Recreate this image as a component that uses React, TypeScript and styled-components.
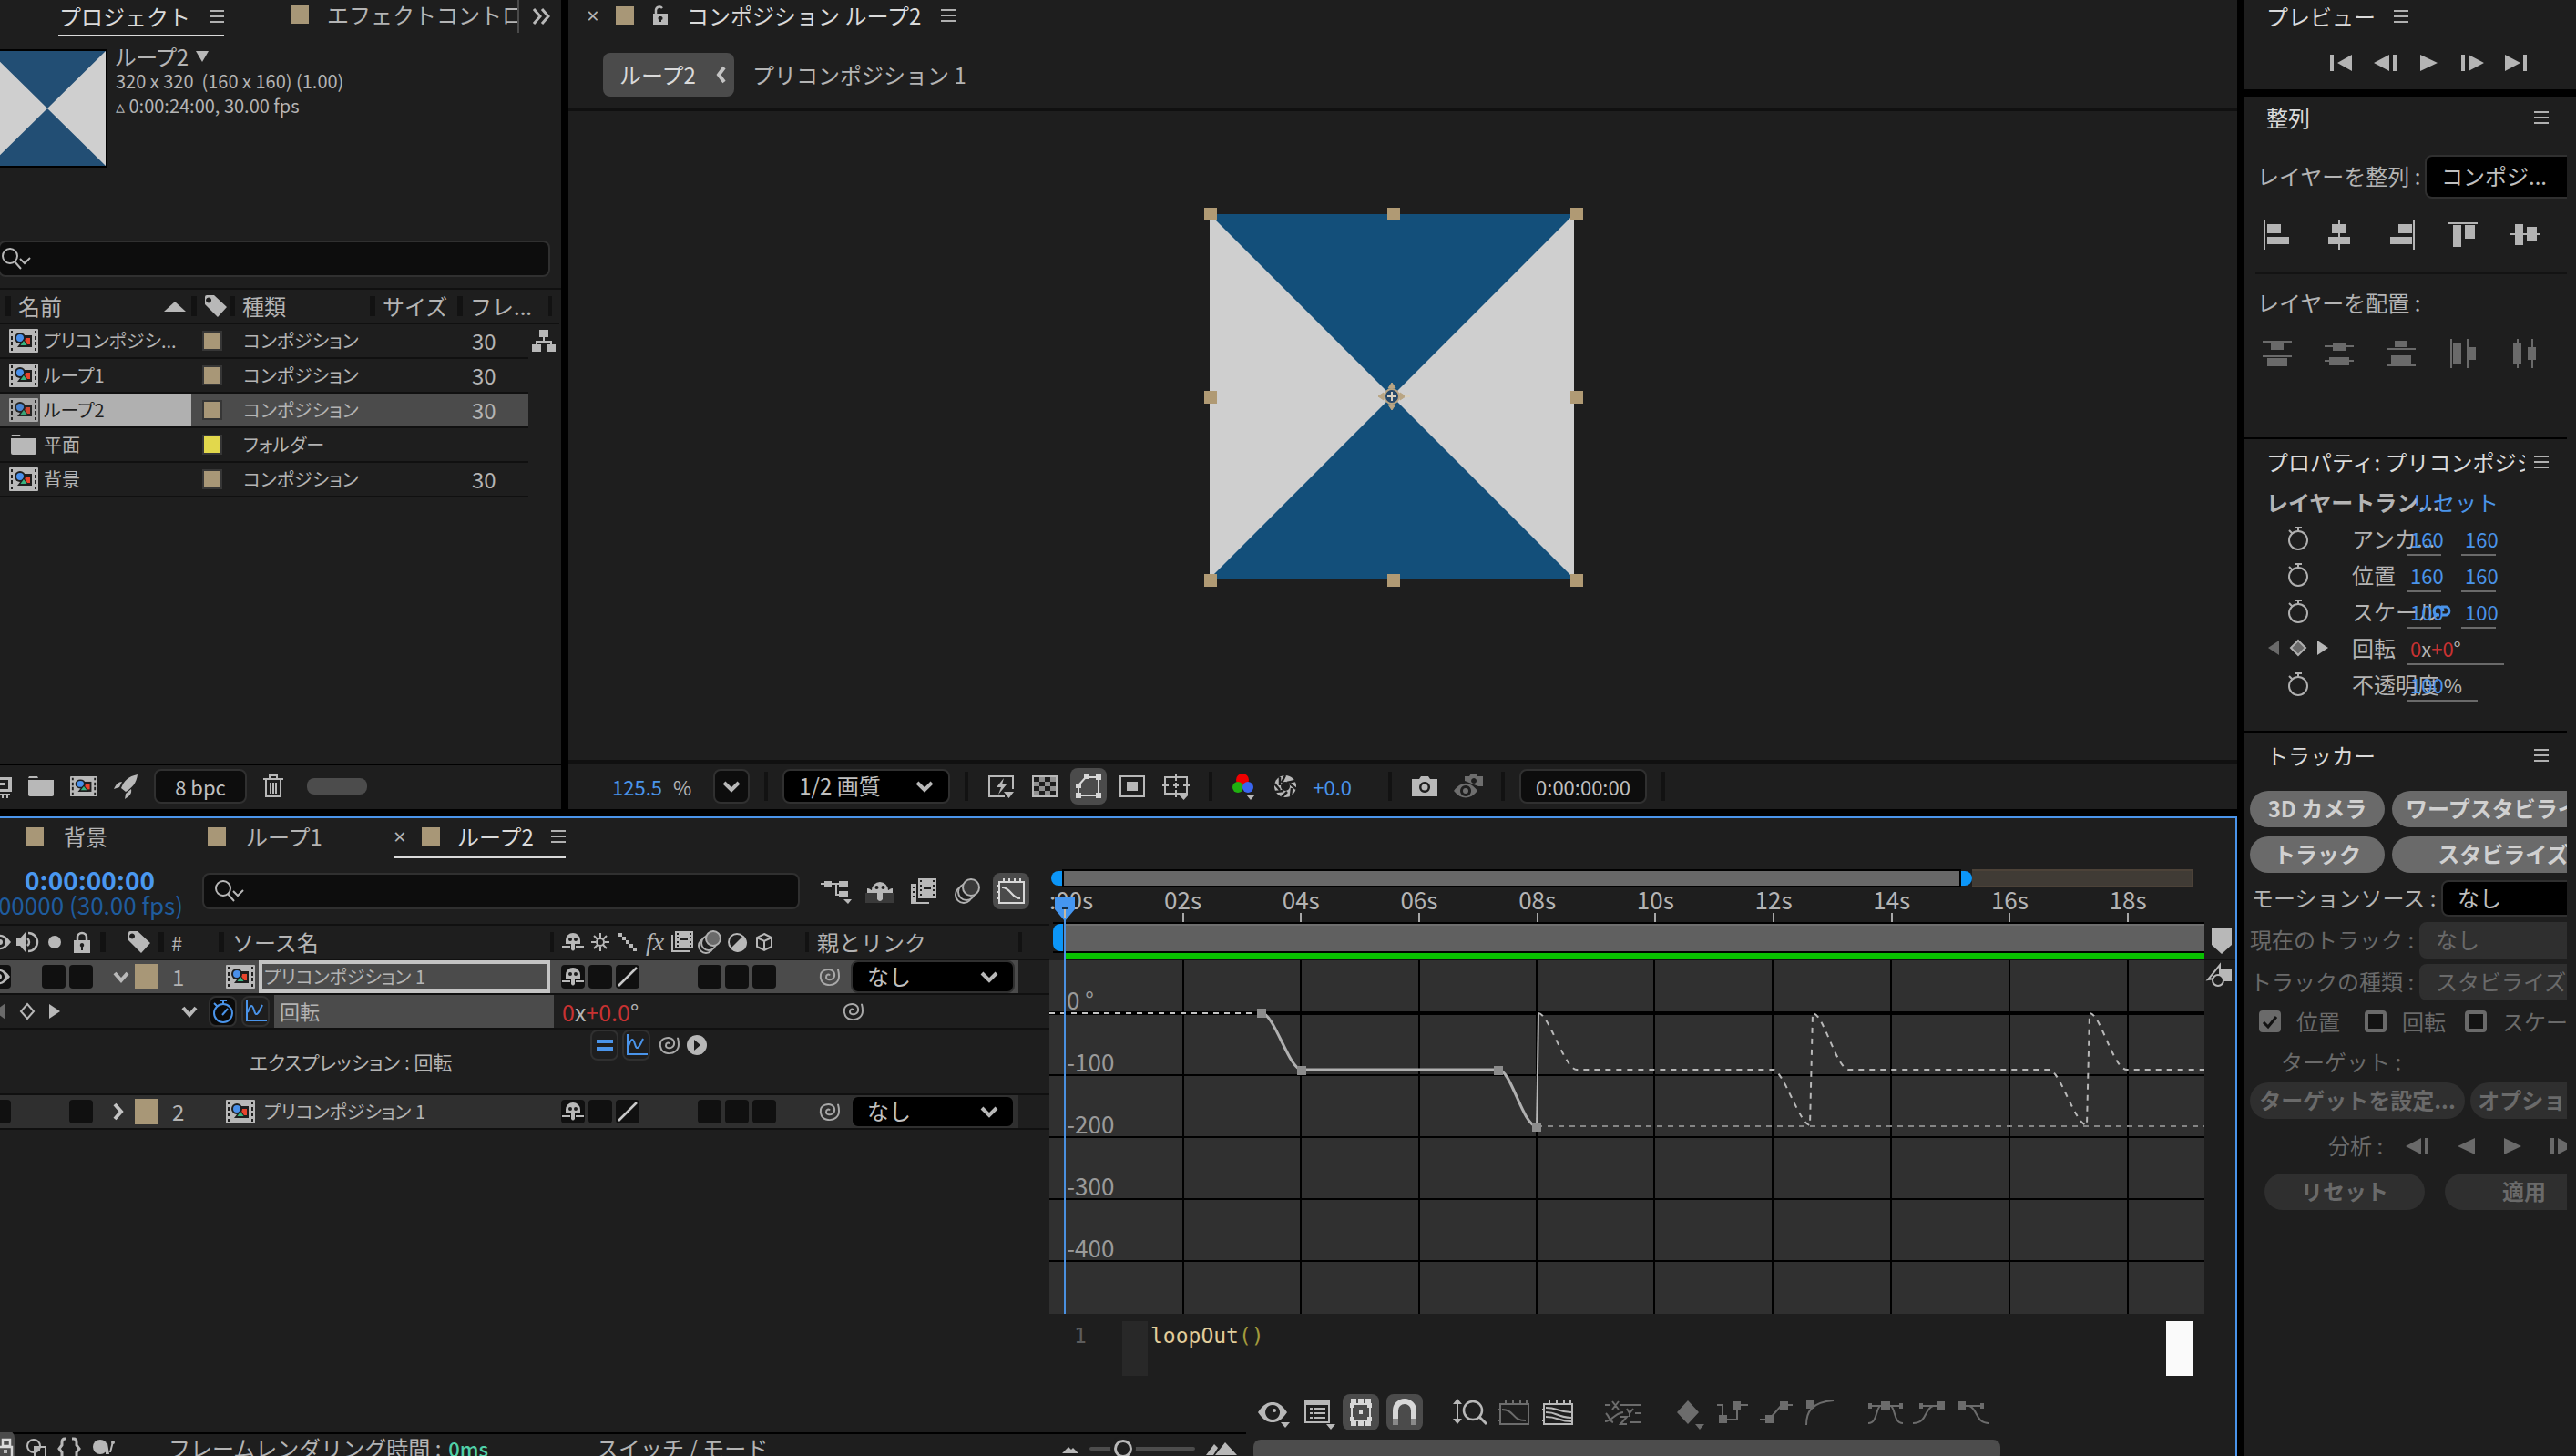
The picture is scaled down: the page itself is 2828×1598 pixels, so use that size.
import React from "react";
import styled, { createGlobalStyle, css } from "styled-components";

const C = {
  bg: "#1e1e1e",
  line: "#101010",
  field: "#0d0d0d",
  edge: "#303030",
  text: "#b4b4b4",
  bright: "#dadada",
  dim: "#6a6a6a",
  select: "#4b4b4b",
  blue: "#4a94ea",
  red: "#c83232",
  tan: "#a89777",
};

const Global = createGlobalStyle`
  * { box-sizing: border-box; }
  body { margin: 0; background: #000; }
  body, button, input, select {
    font-family: "Noto Sans CJK JP", "Noto Sans", sans-serif;
    font-size: 24px;
    line-height: 32px;
    color: ${C.text};
  }
  button, input, select { margin: 0; padding: 0; border: 0; background: none; border-radius: 0; outline: none; }
  button { flex: none; white-space: nowrap; }
  button svg { display: block; }
`;

/* ---------- frame ---------- */

const Frame = styled.div`
  display: grid;
  grid-template-columns: minmax(0, 1fr) 364px;
  gap: 8px;
  height: 100vh;
  overflow: hidden;
  background: #000;
  white-space: nowrap;
`;
const Workspace = styled.div`
  display: grid;
  grid-template-rows: 888px minmax(0, 1fr);
  gap: 8px;
  min-width: 0;
`;
const TopRow = styled.div`
  display: grid;
  grid-template-columns: 616px minmax(0, 1fr);
  gap: 8px;
`;
const Panel = styled.section`
  display: flex;
  flex-direction: column;
  min-width: 0;
  background: ${C.bg};
  overflow: hidden;
`;
const Spacer = styled.div`
  flex: 1;
`;
const Gap = styled.span<{ $w: number }>`
  flex: none;
  width: ${(p) => p.$w}px;
`;
const Svg = styled.svg`
  display: block;
  flex: none;
  overflow: visible;
`;

type IconProps = { w: number; h: number; color?: string; children?: React.ReactNode };
const Icon = ({ w, h, color = "#b8b8b8", children }: IconProps) => (
  <Svg width={w} height={h} viewBox={`0 0 ${w} ${h}`} fill={color} aria-hidden="true">
    {children}
  </Svg>
);

/* ---------- icons ---------- */

const MenuIcon = () => (
  <Icon w={16} h={14} color="#b0b0b0">
    <path d="M0 0h16v2H0zM0 6h16v2H0zM0 12h16v2H0z" />
  </Icon>
);
const SearchIcon = () => (
  <Icon w={32} h={24}>
    <g fill="none" stroke="#b8b8b8" strokeWidth="2">
      <circle cx="9" cy="9" r="8" />
      <path d="M14 15l7 8M20 12l5 5 6-6" />
    </g>
  </Icon>
);
const TagIcon = () => (
  <Icon w={25} h={24}>
    <path fillRule="evenodd" d="M1 2q0-2 2-2h8l14 13-10 11L1 10zM5 2.5a3 3 0 1 0 .1 0z" />
  </Icon>
);
const CompIcon = ({ w = 32, h = 26 }: { w?: number; h?: number }) => (
  <Svg width={w} height={h} viewBox="0 0 32 26" preserveAspectRatio="none" aria-hidden="true">
    <rect width="32" height="26" rx="1" fill="#b8b8b8" />
    <path d="M2 2h2v3H2zM2 8h2v4H2zM2 14h2v4H2zM2 21h2v3H2zM28 2h2v3h-2zM28 8h2v4h-2zM28 14h2v4h-2zM28 21h2v3h-2z" fill="#1e1e1e" />
    <rect x="14" y="7" width="11" height="13" fill="#1e1e1e" />
    <rect x="17" y="10" width="6" height="7" fill="#e8442c" />
    <circle cx="12" cy="10" r="6" fill="#1e1e1e" />
    <circle cx="12" cy="10" r="4" fill="#4a90ea" />
    <path d="M16 11l6 9H9z" fill="#1e1e1e" />
    <path d="M16 13l3.500 5h-7z" fill="#38b480" />
  </Svg>
);
const FolderIcon = () => (
  <Icon w={28} h={22}>
    <path d="M1 0h9l1 2H0zM0 4h28v16q0 2-2 2H2q-2 0-2-2z" />
  </Icon>
);
const NetworkIcon = () => (
  <Icon w={26} h={24}>
    <path d="M8 0h10v8H8zM12 8h2v4h8v4h-2v-2H6v2H4v-4h8zM0 16h10v8H0zM16 16h10v8H16z" />
  </Icon>
);
const Chevron = ({ dir = "down", w = 20 }: { dir?: "down" | "right" | "left"; w?: number }) =>
  dir === "down" ? (
    <Icon w={w} h={12}>
      <path d={`M2 2l${w / 2 - 2} 8 ${w / 2 - 2}-8`} fill="none" stroke="#b8b8b8" strokeWidth="4" />
    </Icon>
  ) : (
    <Icon w={12} h={18}>
      <path d={dir === "right" ? "M2 1l7 8-7 8" : "M9 1L3 9l6 8"} fill="none" stroke="#c4c4c4" strokeWidth="4" />
    </Icon>
  );
const ShyIcon = () => (
  <Icon w={24} h={20}>
    <path d="M0 14h9v2H0zM15 14h9v2h-9zM4 12V8a8 8 0 0 1 16 0v4h-6v6q-2 3-4 0v-6z" />
    <circle cx="9" cy="7" r="2" fill="#1a1a1a" />
    <circle cx="15" cy="7" r="2" fill="#1a1a1a" />
  </Icon>
);
const SlashIcon = () => (
  <Icon w={24} h={22}>
    <path d="M2 21L22 1" stroke="#c8c8c8" strokeWidth="2.5" />
  </Icon>
);
const SpiralIcon = () => (
  <Icon w={24} h={22}>
    <path
      d="M13 10c-1-2-4-1-4 2s4 4 7 2 3-8-1-10S4 4 3 9s1 11 8 12 12-4 12-10-1-6-1-8"
      transform="scale(1 .95)"
      fill="none"
      stroke="#a8a8a8"
      strokeWidth="2"
    />
  </Icon>
);
const StopwatchIcon = ({ color = "#b0b0b0", hand = false }: { color?: string; hand?: boolean }) => (
  <Icon w={24} h={26}>
    <g fill="none" stroke={color} strokeWidth="2">
      <circle cx="12" cy="15" r="10" />
      <path d="M8 1h8M12 1v4M2 4l4 4" />
      {hand && <path d="M11 17l6-7" />}
    </g>
  </Icon>
);
const GraphLineIcon = () => (
  <Icon w={24} h={24}>
    <path d="M2 0v22h22M3 13c3-9 5-9 7-2s4 5 9-6" fill="none" stroke={C.blue} strokeWidth="2" />
  </Icon>
);
const MotionBlurIcon = () => (
  <Icon w={28} h={28}>
    <g fill={C.bg} stroke="#b0b0b0" strokeWidth="2">
      <circle cx="10" cy="18" r="9" />
      <circle cx="13" cy="15" r="9" />
      <circle cx="18" cy="10" r="9" fill="#3a3a3a" />
    </g>
  </Icon>
);
const FrameBlendIcon = () => (
  <Icon w={28} h={28}>
    <path d="M0 6h6v20h14v2H0z" />
    <path fillRule="evenodd" d="M8 0h20v22H8zM10 2v2h2V2zM10 7v2h2V7zM10 12v2h2v-2zM10 17v2h2v-2zM24 2v2h2V2zM24 7v2h2V7zM24 12v2h2v-2zM24 17v2h2v-2zM14 10v2h8v-2z" />
    <path d="M2 9h2v2H2zM2 14h2v2H2zM2 19h2v2H2z" fill="#1e1e1e" />
  </Icon>
);
const EyeIcon = () => (
  <Icon w={24} h={16}>
    <path fillRule="evenodd" d="M0 8C8-3 16-3 24 8c-8 11-16 11-24 0zm12-6a6 6 0 1 0 .1 0z" />
    <circle cx="12" cy="8" r="3" />
  </Icon>
);
const LockIcon = () => (
  <Icon w={18} h={24}>
    <path d="M4 11V7a5 5 0 0 1 10 0v4" fill="none" stroke="#b8b8b8" strokeWidth="2.5" />
    <path fillRule="evenodd" d="M0 10h18v14H0zM9 13a2.4 2.4 0 0 0-1 4.500v3.500h2v-3.500a2.400 2.400 0 0 0-1-4.500z" />
  </Icon>
);
type Transport = "first" | "prev" | "back" | "play" | "next" | "last";
const TransportIcon = ({ kind, color = "#b4b4b4" }: { kind: Transport; color?: string }) => (
  <Icon w={kind === "play" || kind === "back" ? 19 : 25} h={18} color={color}>
    {
      {
        first: <path d="M0 0h4v18H0zM24 0v18L8 9z" />,
        prev: <path d="M21 0h4v18h-4zM17 0v18L0 9z" />,
        back: <path d="M19 0v18L0 9z" />,
        play: <path d="M0 0v18l19-9z" />,
        next: <path d="M0 0h4v18H0zM8 0v18l17-9z" />,
        last: <path d="M0 0v18l17-9zM20 0h4v18h-4z" />,
      }[kind]
    }
  </Icon>
);

/* ---------- shared parts ---------- */

const IconButton = styled.button<{ $on?: boolean; $w?: number }>`
  display: flex;
  align-items: center;
  justify-content: center;
  width: ${(p) => p.$w ?? 40}px;
  height: 40px;
  border-radius: 8px;
  background: ${(p) => (p.$on ? C.select : "transparent")};
`;
const BareButton = styled.button`
  display: flex;
  align-items: center;
`;
const Swatch = styled.span`
  flex: none;
  width: 20px;
  height: 20px;
  background: ${C.tan};
`;
const Divider = styled.div<{ $h?: number; $color?: string }>`
  flex: none;
  height: ${(p) => p.$h ?? 2}px;
  background: ${(p) => p.$color ?? C.line};
`;
const ColumnBar = styled.span<{ $w?: number }>`
  flex: none;
  width: ${(p) => p.$w ?? 6}px;
  height: 22px;
  background: #121212;
`;
const SearchBox = styled.label`
  display: flex;
  align-items: center;
  height: 40px;
  border: 2px solid ${C.edge};
  border-radius: 8px;
  background: ${C.field};
  input { flex: 1; min-width: 0; }
`;
const SelectBox = styled.span<{ $h?: number; $w?: number; $muted?: boolean }>`
  display: flex;
  align-items: center;
  flex: none;
  width: ${(p) => p.$w ?? 200}px;
  height: ${(p) => p.$h ?? 40}px;
  padding: 0 16px;
  border: 2px solid ${(p) => (p.$muted ? "#2f2f2f" : C.edge)};
  border-radius: 8px;
  background: ${(p) => (p.$muted ? "#2f2f2f" : "#000")};
  select {
    flex: 1;
    min-width: 0;
    padding-bottom: 2px;
    appearance: none;
    opacity: 1;
    color: ${(p) => (p.$muted ? C.dim : "#c0c0c0")};
  }
`;
type DropProps = { id?: string; label?: string; value: string; w?: number; h?: number; muted?: boolean };
const Drop = ({ id, label, value, w, h, muted }: DropProps) => (
  <SelectBox $w={w} $h={h} $muted={muted}>
    <select id={id} aria-label={label} disabled={muted}>
      <option>{value}</option>
    </select>
    <Chevron />
  </SelectBox>
);

/* ---------- tabs ---------- */

const Tabs = styled.div`
  display: flex;
  align-items: flex-start;
  flex: none;
  height: 54px;
  overflow: hidden;
`;
const Tab = styled.div<{ $active?: boolean; $gap?: number; $left?: number; $h?: number }>`
  display: flex;
  align-items: center;
  flex: none;
  gap: ${(p) => p.$gap ?? 22}px;
  height: ${(p) => p.$h ?? 40}px;
  margin-left: ${(p) => p.$left ?? 0}px;
  padding-bottom: ${(p) => (p.$active ? 2 : 4)}px;
  border-bottom: ${(p) => (p.$active ? "2px solid #dadada" : "0")};
  color: ${(p) => (p.$active ? C.bright : C.text)};
`;
const CroppedTabs = styled.div`
  display: flex;
  flex: 1;
  min-width: 0;
  margin-right: 14px;
  overflow: hidden;
  border-right: 2px solid #4a4a4a;
`;
const CloseMark = styled.button`
  width: 12px;
  font-family: "Noto Sans", sans-serif;
  line-height: 24px;
  color: ${C.text};
`;
const Cluster = styled.span<{ $gap?: number; $pad?: number; $bright?: boolean }>`
  display: flex;
  align-items: center;
  gap: ${(p) => p.$gap ?? 8}px;
  padding: 0 ${(p) => p.$pad ?? 0}px;
  color: ${(p) => (p.$bright ? C.bright : "inherit")};
`;

/* ---------- project panel ---------- */

const AssetInfo = styled.div`
  display: flex;
  gap: 9px;
  height: 210px;
`;
const Thumb = styled.div`
  width: 118px;
  height: 130px;
  overflow: hidden;
  border: 2px solid #000;
  border-left: 0;
  svg { margin-left: -12px; }
`;
const AssetText = styled.p`
  margin: -6px 0 0;
  font-size: 20px;
  line-height: 27px;
  strong {
    display: flex;
    align-items: center;
    gap: 8px;
    font-size: 24px;
    font-weight: 400;
    font-feature-settings: "palt";
  }
`;
const ProjectSearch = styled(SearchBox)`
  margin: 0 12px 12px -2px;
  padding-left: 2px;
`;
const Items = styled.table`
  width: 614px;
  table-layout: fixed;
  border-collapse: separate;
  border-spacing: 0;
  th, td { height: 38px; padding: 0; text-align: left; font-weight: 400; border-bottom: 2px solid ${C.line}; }
  td:last-child { border-bottom-color: transparent; padding-left: 4px; }
`;
const HeadCell = styled.div<{ $left?: number }>`
  display: flex;
  align-items: center;
  gap: 8px;
  height: 36px;
  padding-left: ${(p) => p.$left ?? 0}px;
  svg:last-child { margin-left: auto; margin-right: 6px; }
`;
const ItemRow = styled.tr<{ $selected?: boolean }>`
  td:not(:last-child) { background: ${(p) => (p.$selected ? C.select : "transparent")}; }
`;
const NameCell = styled.div<{ $selected?: boolean }>`
  display: flex;
  align-items: center;
  height: 36px;
  padding-left: 10px;
  gap: 2px;
  font-size: 20px;
  font-feature-settings: "palt";
  span {
    flex: 1;
    padding-left: 4px;
    line-height: 36px;
    background: ${(p) => (p.$selected ? "#b0b0b0" : "transparent")};
    color: ${(p) => (p.$selected ? "#1e1e1e" : C.text)};
  }
  svg { width: 32px; opacity: ${(p) => (p.$selected ? 0.85 : 1)}; }
`;
const RowSwatch = styled.span<{ $color?: string }>`
  display: block;
  width: 22px;
  height: 22px;
  margin-left: 12px;
  border: 2px solid #363636;
  background: ${(p) => p.$color ?? C.tan};
`;
const KindCell = styled.td`
  &&& { padding-left: 15px; }
  font-size: 20px;
  font-feature-settings: "palt";
`;
const RateCell = styled.td`
  &&& { padding-left: 16px; }
`;
const Footer = styled.div<{ $h: number }>`
  display: flex;
  align-items: center;
  flex: none;
  height: ${(p) => p.$h}px;
`;
const DarkButton = styled.button<{ $w: number }>`
  display: flex;
  align-items: center;
  justify-content: center;
  width: ${(p) => p.$w}px;
  height: 38px;
  border: 2px solid ${C.edge};
  border-radius: 8px;
  background: ${C.field};
  font-size: 22px;
  color: #c0c0c0;
`;
const ProjectTools = styled.div`
  display: flex;
  align-items: center;
  gap: 18px;
  margin-left: -17px;
`;
const ScrollThumb = styled.div<{ $w: number; $h: number; $left?: number }>`
  flex: none;
  width: ${(p) => p.$w}px;
  height: ${(p) => p.$h}px;
  margin-left: ${(p) => p.$left ?? 0}px;
  border-radius: 8px;
  background: #4c4c4c;
`;

const items = [
  { name: "プリコンポジシ...", kind: "コンポジション", rate: "30", net: true },
  { name: "ループ1", kind: "コンポジション", rate: "30" },
  { name: "ループ2", kind: "コンポジション", rate: "30", selected: true },
  { name: "平面", kind: "フォルダー", rate: "", color: "#e2d84c", folder: true },
  { name: "背景", kind: "コンポジション", rate: "30" },
];

const ProjectPanel = () => (
  <Panel aria-label="プロジェクト">
    <Tabs>
      <Tab $active $left={64} $gap={20}>
        <Cluster $pad={1}>プロジェクト</Cluster>
        <MenuIcon />
      </Tab>
      <CroppedTabs>
        <Tab $left={73} $gap={20} $h={36}>
          <Swatch />
          エフェクトコントロール
        </Tab>
      </CroppedTabs>
      <Tab>
        <Icon w={32} h={18}>
          <path d="M2 1l7 8-7 8M11 1l7 8-7 8" fill="none" stroke="#b8b8b8" strokeWidth="3" />
        </Icon>
      </Tab>
    </Tabs>
    <AssetInfo>
      <Thumb>
        <Icon w={128} h={126}>
          <path d="M0 0h128v126H0z" fill="#cfcfcf" />
          <path d="M0 0h128L64 63zM0 126h128L64 63z" fill="#224e74" />
        </Icon>
      </Thumb>
      <AssetText>
        <strong>
          ループ2
          <Icon w={14} h={12}>
            <path d="M0 0h14L7 12z" />
          </Icon>
        </strong>
        320 x 320&nbsp; (160 x 160) (1.00)
        <br />▵ 0:00:24:00, 30.00 fps
      </AssetText>
    </AssetInfo>
    <ProjectSearch>
      <SearchIcon />
      <input aria-label="プロジェクトを検索" />
    </ProjectSearch>
    <Divider />
    <Items>
      <colgroup>
        {[210, 42, 154, 96, 78, 34].map((w, i) => (
          <col key={i} width={w} />
        ))}
      </colgroup>
      <thead>
        <tr>
          <th>
            <HeadCell $left={6}>
              <ColumnBar />
              名前
              <Icon w={24} h={11}>
                <path d="M12 0l12 11H0z" />
              </Icon>
            </HeadCell>
          </th>
          <th>
            <HeadCell>
              <ColumnBar />
              <TagIcon />
            </HeadCell>
          </th>
          <th>
            <HeadCell>
              <ColumnBar />
              種類
            </HeadCell>
          </th>
          <th>
            <HeadCell>
              <ColumnBar />
              サイズ
            </HeadCell>
          </th>
          <th>
            <HeadCell>
              <ColumnBar />
              フレ...
            </HeadCell>
          </th>
          <th>
            <HeadCell $left={22}>
              <ColumnBar $w={4} />
            </HeadCell>
          </th>
        </tr>
      </thead>
      <tbody>
        {items.map((it) => (
          <ItemRow key={it.name} $selected={it.selected}>
            <td>
              <NameCell $selected={it.selected}>
                {it.folder ? <FolderIcon /> : <CompIcon />}
                <span>{it.name}</span>
              </NameCell>
            </td>
            <td>
              <RowSwatch $color={it.color} />
            </td>
            <KindCell>{it.kind}</KindCell>
            <td />
            <RateCell>{it.rate}</RateCell>
            <td>{it.net && <NetworkIcon />}</td>
          </ItemRow>
        ))}
      </tbody>
    </Items>
    <Spacer />
    <Divider $color="#000" />
    <Footer $h={46}>
      <ProjectTools>
        <BareButton aria-label="フッテージを変換">
          <Icon w={30} h={24}>
            <path fillRule="evenodd" d="M0 2h30v16H0zM4 5v10h22V5z" />
            <path d="M8 8h14v3H8zM14 20h14v2h-2v3h-2v-3h-3v3h-2v-3h-5z" />
          </Icon>
        </BareButton>
        <BareButton aria-label="新規フォルダー">
          <FolderIcon />
        </BareButton>
        <BareButton aria-label="新規コンポジション">
          <CompIcon w={30} h={22} />
        </BareButton>
        <BareButton aria-label="プロジェクト設定">
          <Icon w={26} h={27}>
            <path d="M26 0C16 2 11 7 8 15l5 4C20 15 25 9 26 0zM9 8c-4 0-7 3-9 8l6-2zM12 27c5-3 8-6 7-11l-6 5z" />
          </Icon>
        </BareButton>
        <DarkButton $w={102}>8 bpc</DarkButton>
        <BareButton aria-label="削除">
          <Icon w={22} h={26}>
            <path d="M0 5h22M7 4V1h8v3M3 6v18h16V6M8 9v12M11 9v12M14 9v12" fill="none" stroke="#b8b8b8" strokeWidth="2" />
          </Icon>
        </BareButton>
        <ScrollThumb $w={66} $h={18} $left={8} />
      </ProjectTools>
    </Footer>
    <Divider $color={C.bg} />
  </Panel>
);

/* ---------- composition panel ---------- */

const Crumbs = styled.nav`
  display: flex;
  align-items: center;
  flex: none;
  gap: 20px;
  height: 64px;
  padding: 0 38px 8px;
`;
const Crumb = styled.button<{ $on?: boolean }>`
  display: flex;
  align-items: center;
  justify-content: space-between;
  height: 48px;
  border-radius: 8px;
  ${(p) =>
    p.$on &&
    css`
      width: 144px;
      padding: 0 8px 0 18px;
      background: ${C.select};
      color: ${C.bright};
    `}
`;
const Viewer = styled.div`
  position: relative;
  flex: 1;
`;
const Artwork = styled.div`
  position: absolute;
  left: calc(50% - 220px);
  top: 104px;
`;
const ViewerBar = styled(Footer)`
  padding-left: 46px;
  gap: 16px;
`;
const BarLine = styled.span`
  flex: none;
  width: 4px;
  height: 32px;
  background: #121212;
`;
const BlueText = styled.span`
  padding-left: 2px;
  color: ${C.blue};
  font-size: 22px;
`;
const Zoom = styled.span`
  display: flex;
  align-items: center;
  gap: 12px;
  margin-right: 8px;
  font-size: 22px;
`;

const handles = [9, 210, 411];
const CompositionPanel = () => (
  <Panel aria-label="コンポジション">
    <Tabs>
      <Tab $left={20} $gap={20} $h={38}>
        <CloseMark aria-label="閉じる">×</CloseMark>
        <Swatch />
        <Icon w={18} h={20}>
          <path d="M4 9V4a4 4 0 0 1 7-2" fill="none" stroke="#b8b8b8" strokeWidth="2.500" />
          <path fillRule="evenodd" d="M1 8h16v12H1zM9 11a2 2 0 0 0-1 4v2h2v-2a2 2 0 0 0-1-4z" />
        </Icon>
        <Cluster $gap={22} $bright>
          コンポジション ループ2 <MenuIcon />
        </Cluster>
      </Tab>
    </Tabs>
    <Crumbs>
      <Crumb $on>
        ループ2 <Chevron dir="left" />
      </Crumb>
      <Crumb>プリコンポジション 1</Crumb>
    </Crumbs>
    <Divider $h={4} />
    <Viewer>
      <Artwork>
        <Icon w={418} h={418}>
          <path d="M8 9h400v400H8z" fill="#cfcfcf" />
          <path d="M8 9h400L208 209zM8 409h400L208 209z" fill="#134f7a" />
          <g stroke="#b9a583" strokeWidth="2" fill="#25486a">
            <circle cx="208" cy="209" r="8" />
            <path d="M208 194l4 6h-8zM208 224l4-6h-8zM193 209l6-4v8zM223 209l-6-4v8z" fill="#b9a583" strokeWidth="1" />
            <path d="M203 209h10M208 204v10M222 209h6" stroke="#d8d0c0" />
          </g>
          {handles.map((y) =>
            handles.map((x) =>
              x === 210 && y === 210 ? null : (
                <rect key={`${x}-${y}`} x={x - 7} y={y - 7} width="14" height="14" fill="#b09a74" />
              ),
            ),
          )}
        </Icon>
      </Artwork>
    </Viewer>
    <Divider $h={4} />
    <ViewerBar $h={50}>
      <Zoom>
        <BlueText>125.5</BlueText>%
      </Zoom>
      <DarkButton $w={40} aria-label="拡大率">
        <Chevron />
      </DarkButton>
      <BarLine />
      <Drop label="画質" value="1/2 画質" w={184} h={38} />
      <BarLine />
      <Cluster>
        <IconButton aria-label="高速プレビュー">
          <Icon w={28} h={24}>
            <path d="M18 23H1V1h26v14" fill="none" stroke="#b8b8b8" strokeWidth="2" />
            <path d="M17 3L9 13h5l-3 8 9-11h-5zM17 18h11l-5.500 7z" />
          </Icon>
        </IconButton>
        <IconButton aria-label="透明グリッド">
          <Icon w={28} h={24}>
            <path d="M1 1h26v22H1z" fill="#1e1e1e" stroke="#b8b8b8" strokeWidth="2" />
            <path d="M8 2h6v5H8zM20 2h6v5h-6zM2 7h6v5H2zM14 7h6v5h-6zM8 12h6v5H8zM20 12h6v5h-6zM2 17h6v5H2zM14 17h6v5h-6z" fill="#909090" />
          </Icon>
        </IconButton>
        <IconButton $on aria-label="マスク表示">
          <Icon w={28} h={26} color="#d8d8d8">
            <path d="M3 23V12l8-9h14v20z" fill="none" stroke="#d8d8d8" strokeWidth="2" />
            <path d="M0 20h6v6H0zM22 20h6v6h-6zM22 0h6v6h-6zM9 0h5v5H9zM0 10h6v5H0z" />
          </Icon>
        </IconButton>
        <IconButton aria-label="関心領域">
          <Icon w={28} h={24}>
            <path d="M1 1h26v22H1z" fill="none" stroke="#b8b8b8" strokeWidth="2" />
            <path d="M8 7h12v10H8z" />
          </Icon>
        </IconButton>
        <IconButton aria-label="グリッドとガイド">
          <Icon w={30} h={28}>
            <path d="M3 4h24v18H3zM15 0v8M15 18v8M0 13h7M23 13h7M12 13h6M15 10v6" fill="none" stroke="#b8b8b8" strokeWidth="2" />
            <path d="M18 23h11l-5.500 6z" />
          </Icon>
        </IconButton>
      </Cluster>
      <BarLine />
      <Cluster>
        <IconButton $w={36} aria-label="チャンネル">
          <Icon w={24} h={28}>
            <circle cx="11" cy="7" r="7" fill="#f00000" />
            <circle cx="6" cy="15" r="6" fill="#20b010" />
            <circle cx="17" cy="15" r="6" fill="#3a66f0" />
            <path d="M15 23h10l-5 6z" />
          </Icon>
        </IconButton>
        <IconButton aria-label="露出をリセット">
          <Icon w={26} h={26}>
            <circle cx="13" cy="13" r="12" />
            <path d="M13 1l-4 8M24 7l-9 2M25 16l-7-6M19 24l1-9M9 25l6-6M2 19l9-1M1 10l6 7M7 3v9" stroke="#1e1e1e" strokeWidth="2.500" />
            <circle cx="13" cy="13" r="5" fill="#1e1e1e" />
          </Icon>
        </IconButton>
        <BlueText>+0.0</BlueText>
      </Cluster>
      <Gap $w={8} />
      <BarLine />
      <Cluster>
        <IconButton aria-label="スナップショット">
          <Icon w={28} h={22}>
            <path fillRule="evenodd" d="M0 3h8l2-3h8l2 3h8v19H0zM14 6a6 6 0 1 0 .1 0z" />
            <circle cx="14" cy="12" r="3.500" />
          </Icon>
        </IconButton>
        <IconButton aria-label="スナップショットを表示">
          <Icon w={32} h={28} color="#6e6e6e">
            <path fillRule="evenodd" d="M0 19c8-11 18-11 26 0-8 10-18 10-26 0zm13-6a6 6 0 1 0 .1 0z" />
            <circle cx="13" cy="19" r="3" />
            <path fillRule="evenodd" d="M12 3h5l2-3h6l1 3h6v11h-5L12 8zM22 5a3 3 0 1 0 .1 0z" />
          </Icon>
        </IconButton>
      </Cluster>
      <BarLine />
      <DarkButton $w={140}>0:00:00:00</DarkButton>
      <BarLine />
    </ViewerBar>
  </Panel>
);

/* ---------- timeline ---------- */

const TimelineFrame = styled(Panel)`
  border: solid ${C.blue};
  border-width: 2px 2px 0 0;
`;
const TimelineTabs = styled(Tabs)`
  height: 44px;
`;
const TimelineBody = styled.div`
  display: grid;
  grid-template-columns: 1152px minmax(0, 1fr);
  flex: 1;
  min-height: 0;
`;
const Layers = styled.div`
  display: flex;
  flex-direction: column;
`;
const TimeBar = styled.div`
  display: flex;
  align-items: center;
  height: 72px;
`;
const Timecode = styled.div`
  display: flex;
  flex-direction: column;
  align-items: flex-end;
  width: 222px;
  padding: 2px 21px 0 0;
  font-size: 26px;
  color: #1f5c9e;
  line-height: 28px;
  strong {
    padding-right: 31px;
    font-size: 28px;
    color: #4a98f0;
  }
`;
const LayerSearch = styled(SearchBox)`
  width: 656px;
  margin-right: 20px;
  padding-left: 12px;
`;
const Grid = styled.div<{ $bg?: string; $h?: number }>`
  display: grid;
  grid-template-columns: 110px 64px 66px 364px 280px 234px;
  width: 1118px;
  height: ${(p) => p.$h ?? 36}px;
  align-items: center;
  background: ${(p) => p.$bg ?? "transparent"};
`;
const Header = styled(Grid)`
  width: 1152px;
  grid-template-columns: 110px 64px 66px 364px 280px 234px 34px;
`;
const Cell = styled.div<{ $gap?: number; $left?: number }>`
  display: flex;
  align-items: center;
  gap: ${(p) => p.$gap ?? 8}px;
  margin-left: ${(p) => p.$left ?? 0}px;
  min-width: 0;
`;
const Slot = styled.span<{ $box?: boolean }>`
  display: flex;
  align-items: center;
  justify-content: center;
  flex: none;
  width: 26px;
  height: 26px;
  margin: 0 2px;
  border-radius: 4px;
  background: ${(p) => (p.$box ? "#101010" : "transparent")};
`;
const LabelChip = styled.span`
  width: 28px;
  height: 28px;
  background: ${C.tan};
`;
const Hash = styled.span`
  font-size: 22px;
`;
const LayerName = styled.span<{ $boxed?: boolean }>`
  flex: 1;
  height: 36px;
  padding-left: ${(p) => (p.$boxed ? 2 : 6)}px;
  border: ${(p) => (p.$boxed ? "4px solid #c4c4c4" : "0")};
  font-size: 20px;
  line-height: ${(p) => (p.$boxed ? 28 : 36)}px;
  font-feature-settings: "palt";
`;
const PropertyName = styled.span`
  flex: 1;
  height: 36px;
  padding-left: 6px;
  background: ${C.select};
  font-size: 22px;
  line-height: 34px;
`;
const PropertyGrid = styled(Grid)`
  grid-template-columns: 199px 409px 310px 1fr;
`;
const ExpressionGrid = styled(Grid)`
  grid-template-columns: 274px 374px 1fr;
  align-items: start;
`;
const ExpressionLabel = styled.span`
  padding-top: 19px;
  font-size: 21px;
  font-feature-settings: "palt";
`;
const ToggleBox = styled.button<{ $filled?: boolean }>`
  display: flex;
  align-items: center;
  justify-content: center;
  width: 31px;
  height: 34px;
  border: 2px solid #303030;
  border-radius: 8px;
  background: ${(p) => (p.$filled ? "#0a0a0a" : "transparent")};
`;
const Red = styled.span`
  color: ${C.red};
`;
const Angle = styled.span`
  font-size: 25px;
`;

const SunIcon = () => (
  <Icon w={20} h={20}>
    <circle cx="10" cy="10" r="4" fill="none" stroke="#b8b8b8" strokeWidth="2" />
    <path d="M10 0v5M10 15v5M0 10h5M15 10h5M3 3l4 4M13 13l4 4M3 17l4-4M13 7l4-4" stroke="#b8b8b8" strokeWidth="2" />
  </Icon>
);
const FxMark = styled.i`
  font-family: "Liberation Serif", serif;
  font-size: 28px;
  line-height: 26px;
`;

const LayerSwitches = () => (
  <Cell $gap={0} $left={10}>
    <Slot $box>
      <ShyIcon />
    </Slot>
    <Slot $box />
    <Slot $box>
      <SlashIcon />
    </Slot>
    <Slot />
    <Slot />
    <Slot $box />
    <Slot $box />
    <Slot $box />
  </Cell>
);

const LayerRow = ({ n, open, eye }: { n: number; open?: boolean; eye?: boolean }) => (
  <>
    <Grid $bg={open ? C.select : "#2f2f2f"}>
      <Cell $gap={0} $left={-16}>
        <Slot $box>{eye && <EyeIcon />}</Slot>
        <Slot />
        <Slot $box={open} />
        <Slot $box />
      </Cell>
      <Cell $left={14} $gap={open ? 6 : 12}>
        <BareButton aria-label="展開">{open ? <Chevron w={18} /> : <Chevron dir="right" />}</BareButton>
        <LabelChip />
      </Cell>
      <Cell $left={15}>{n}</Cell>
      <Cell $left={8} $gap={4}>
        <CompIcon />
        <LayerName $boxed={open}>プリコンポジション 1</LayerName>
      </Cell>
      <LayerSwitches />
      <Cell $left={14} $gap={12}>
        <SpiralIcon />
        <Drop label={`親 ${n}`} value="なし" w={180} h={36} />
      </Cell>
    </Grid>
    <Divider />
  </>
);

/* ---------- graph editor ---------- */

const GraphSide = styled.div`
  display: flex;
  flex-direction: column;
  min-width: 0;
  padding-top: 12px;
`;
const GraphRow = styled.div`
  display: grid;
  grid-template-columns: minmax(0, 1fr) 34px;
`;
const Navigator = styled.div`
  display: flex;
  height: 20px;
  margin: 0 12px 0 2px;
`;
const NavCap = styled.span<{ $right?: boolean }>`
  width: 12px;
  height: 16px;
  margin-top: 2px;
  background: #0c96f8;
  border-radius: ${(p) => (p.$right ? "0 8px 8px 0" : "8px 0 0 8px")};
`;
const NavBar = styled.span`
  flex: 988;
  border: 2px solid #000;
  background: #686868;
`;
const NavRest = styled.span`
  flex: 242;
  border: 2px solid #4c4238;
  border-left: 0;
  background: #403b35;
`;
const RulerBox = styled.div`
  height: 38px;
  overflow: hidden;
`;
const Ruler = styled.ol`
  display: grid;
  grid-template-columns: repeat(10, 1fr);
  height: 38px;
  margin: 0 19px 0 -48px;
  padding: 0;
  list-style: none;
`;
const Tick = styled.li`
  display: flex;
  flex-direction: column;
  align-items: center;
  font-size: 26px;
  line-height: 26px;
  &::after { content: ""; width: 2px; height: 10px; margin-top: 2px; background: #a8a8a8; }
  &:first-child::after { background: transparent; }
`;
const WorkArea = styled.div`
  display: flex;
  height: 34px;
  border: solid #000;
  border-width: 2px 0;
  margin-left: 4px;
`;
const WorkCap = styled.span`
  width: 11px;
  background: #0c96f8;
  border-radius: 8px 0 0 8px;
`;
const WorkBar = styled.span`
  flex: 1;
  margin-left: 2px;
  background: #606060;
  border-top: 2px solid #6e6e6e;
`;
const Cached = styled.div`
  height: 8px;
  margin-left: 17px;
  background: #08c000;
  border-bottom: 2px solid #101010;
`;
const Graph = styled.div`
  position: relative;
  height: 388px;
  background: #303030;
  overflow: hidden;
  & > svg { position: absolute; left: 0; top: 0; }
`;
const AxisLabels = styled.ol`
  position: relative;
  margin: 0;
  padding: 26px 0 0 19px;
  list-style: none;
  font-size: 26px;
  color: #9a9a9a;
  li { height: 68px; line-height: 34px; }
`;
const PlayheadHost = styled.div`
  position: relative;
`;
const Playhead = styled.div`
  position: absolute;
  left: 6px;
  top: 30px;
`;
const Markers = styled.div`
  display: flex;
  flex-direction: column;
  align-items: flex-end;
  padding: 65px 4px 0 0;
`;
const MarkerLine = styled.div`
  width: 34px;
  height: 2px;
  margin: 5px -4px 4px 0;
  background: ${C.line};
`;
const Editor = styled.div`
  display: flex;
  height: 60px;
  margin: 8px 46px 20px 0;
  font-family: "DejaVu Sans Mono", monospace;
  font-size: 23px;
`;
const LineNo = styled.span`
  width: 80px;
  padding-left: 27px;
  color: #5c5c5c;
`;
const Gutter = styled.span`
  width: 28px;
  background: #282828;
`;
const Code = styled.code`
  flex: 1;
  padding-left: 3px;
  font-family: inherit;
  color: #e2cd9a;
  em { font-style: normal; color: #a39a3c; }
`;
const EditorHandle = styled.span`
  width: 30px;
  background: #fafafa;
`;
const GraphTools = styled.div`
  display: flex;
  align-items: center;
  gap: 8px;
  height: 40px;
  padding-left: 226px;
`;
const BottomBar = styled.div`
  display: grid;
  grid-template-columns: 1368px minmax(0, 1fr);
  flex: none;
  height: 26px;
  overflow: hidden;
`;
const Status = styled.div`
  display: flex;
  align-items: flex-start;
  height: 34px;
  border-top: 2px solid #000;
`;
const StatusIcons = styled.div`
  display: flex;
  align-items: center;
  gap: 13px;
  width: 186px;
  height: 32px;
  margin-left: -14px;
`;
const StatusText = styled.span<{ $w: number }>`
  width: ${(p) => p.$w}px;
  line-height: 30px;
  b { margin-left: 8px; font-size: 22px; font-weight: 500; color: #50d0a8; }
`;
const ZoomBar = styled.label`
  display: flex;
  align-items: center;
  gap: 12px;
  height: 32px;
`;
const ZoomRange = styled.input`
  width: 116px;
  height: 24px;
  appearance: none;
  background: transparent;
  &::-webkit-slider-runnable-track { height: 4px; background: #4c4c4c; border-radius: 2px; }
  &::-webkit-slider-thumb {
    appearance: none;
    width: 20px;
    height: 20px;
    margin-top: -8px;
    border: 3px solid #b8b8b8;
    border-radius: 50%;
    background: ${C.bg};
    box-shadow: 0 0 0 4px ${C.bg};
  }
`;
const ScrollArea = styled.div`
  padding: 8px 0 0 8px;
`;

const hours = ["0:00s", "02s", "04s", "06s", "08s", "10s", "12s", "14s", "16s", "18s"];
const vLines = [17, 147, 276, 406, 535, 664, 794, 924, 1054, 1184];

const Curves = () => (
  <Icon w={1268} h={388}>
    <g fill="none">
      <path d={vLines.map((x) => `M${x} 0v388`).join("")} stroke="#000" strokeWidth="2" />
      <path d="M0 126h1268M0 194h1268M0 262h1268M0 330h1268" stroke="#000" strokeWidth="2" />
      <path d="M0 58h1268" stroke="#000" strokeWidth="4" />
      <path d="M0 58h233" stroke="#c4c4c4" strokeWidth="2" strokeDasharray="6 6" />
      <path d="M535 182h733" stroke="#858585" strokeWidth="2" strokeDasharray="6 6" />
      <path
        d="M537 58C548 58 566 120 579 120H795C806 122 824 180 835 181L838 58C850 58 864 120 878 120H1098C1110 122 1126 180 1139 181L1142 58C1154 58 1168 120 1183 120H1268"
        stroke="#b8b8b8"
        strokeWidth="2"
        strokeDasharray="6 6"
      />
      <path d="M233 58C247 58 263 120 277 120H493C507 120 520 182 535 182" stroke="#b0b0b0" strokeWidth="3" />
      <path d="M535 182L537 58" stroke="#b8b8b8" strokeWidth="2" />
    </g>
    <path d="M228 53h10v10h-10zM272 116h10v10h-10zM488 116h10v10h-10zM530 178h10v10h-10z" fill="#8c8c8c" />
  </Icon>
);

const G = "#6c6c6c";
const graphTools: { label: string; on?: boolean; node: React.ReactNode }[] = [
  {
    label: "表示",
    node: (
      <Icon w={34} h={28}>
        <g transform="translate(0 3)">
          <path fillRule="evenodd" d="M0 11C6 2 11 0 16 0s10 2 16 11c-6 9-11 11-16 11S6 20 0 11zm16-8a8 8 0 1 0 .1 0z" />
          <circle cx="18" cy="9" r="2" />
          <path d="M25 22h10l-5 6z" />
        </g>
      </Icon>
    ),
  },
  {
    label: "グラフの種類",
    node: (
      <Icon w={28} h={26}>
        <path d="M1 2h26v22H1z" fill="none" stroke="#b8b8b8" strokeWidth="2" />
        <path d="M0 0h28v5H0zM6 8h3v2H6zM11 8h12v2H11zM6 13h3v2H6zM11 13h12v2H11zM6 18h3v2H6zM11 18h12v2H11zM24 26h10l-5 6z" />
      </Icon>
    ),
  },
  {
    label: "変形ボックス",
    on: true,
    node: (
      <Icon w={30} h={30} color="#d8d8d8">
        <path d="M5 3v24M25 3v24M3 6h24M3 24h24" fill="none" stroke="#d8d8d8" strokeWidth="2" />
        <path d="M4 0h6v6H4zM12 0h6v6h-6zM20 0h6v6h-6zM4 24h6v6H4zM12 24h6v6h-6zM20 24h6v6h-6zM13 13h4v4h-4zM3 5h5v5H3zM22 5h5v5h-5zM3 20h5v5H3zM22 20h5v5h-5z" />
      </Icon>
    ),
  },
  {
    label: "スナップ",
    on: true,
    node: (
      <Icon w={26} h={28}>
        <path d="M3 21V12a10 10 0 0 1 20 0v9" fill="none" stroke="#d8d8d8" strokeWidth="6" />
        <path d="M0 21h6v7H0zM20 21h6v7h-6z" fill="#8a8a8a" />
      </Icon>
    ),
  },
  { label: "", node: null },
  {
    label: "自動ズーム",
    node: (
      <Icon w={38} h={30}>
        <path d="M5 4v20" stroke="#b8b8b8" strokeWidth="2" />
        <path d="M5 0l5 6H0zM5 28l5-6H0z" />
        <g fill="none" stroke="#b8b8b8" strokeWidth="2.500">
          <circle cx="22" cy="13" r="10" />
          <path d="M29 20l8 8" strokeWidth="3" />
        </g>
      </Icon>
    ),
  },
  {
    label: "選択範囲をフィット",
    node: (
      <Icon w={34} h={30} color={G}>
        <path d="M2 6h31v22H2zM8 1v5M16 1v5M24 1v5M31 1v5M0 12h3M0 24h3M4 12c14 0 10 12 26 12" fill="none" stroke={G} strokeWidth="2" />
      </Icon>
    ),
  },
  {
    label: "すべてをフィット",
    node: (
      <Icon w={34} h={30}>
        <path d="M2 6h31v22H2zM8 1v5M16 1v5M24 1v5M31 1v5M0 12h3M0 24h3M4 10c14 0 10 4 28 5M4 15c14 0 10 5 28 6M4 20c14 0 14 5 28 5" fill="none" stroke="#b8b8b8" strokeWidth="2" />
      </Icon>
    ),
  },
  { label: "", node: null },
  {
    label: "次元に分割",
    node: (
      <Icon w={40} h={26}>
        <path d="M0 5h6M8 1l7 9M15 1l-7 9M17 5h22M1 14c4 4 4 9 8 10M0 23c8 0 10-9 20-10M24 9l3 5 4-5M27 14v4M33 14h6M17 18h7l-7 8h7M27 24h12" fill="none" stroke={G} strokeWidth="2" />
      </Icon>
    ),
  },
  { label: "", node: null },
  {
    label: "キーフレームを編集",
    node: (
      <Icon w={26} h={26} color={G}>
        <path d="M12 0l12 13-12 13L0 13zM20 26h10l-5 6z" />
      </Icon>
    ),
  },
  {
    label: "停止",
    node: (
      <Icon w={34} h={26} color={G}>
        <path d="M0 5h6v16M10 21h12V5h12" fill="none" stroke={G} strokeWidth="2" />
        <path d="M17 1h9v9h-9zM2 16h9v9H2z" />
      </Icon>
    ),
  },
  {
    label: "リニア",
    node: (
      <Icon w={36} h={26} color={G}>
        <path d="M0 21h10L24 5h12" fill="none" stroke={G} strokeWidth="2" />
        <path d="M22 1h9v9h-9zM6 16h9v9H6z" />
      </Icon>
    ),
  },
  {
    label: "自動ベジェ",
    node: (
      <Icon w={32} h={28} color={G}>
        <path d="M1 28C1 14 6 3 31 1" fill="none" stroke={G} strokeWidth="2" />
        <path d="M1 1h9v9H1z" />
      </Icon>
    ),
  },
  { label: "", node: null },
  {
    label: "イージーイーズ",
    node: (
      <Icon w={38} h={26} color={G}>
        <path d="M2 6h34M0 25c10 0 8-15 13-19M38 25c-10 0-8-15-13-19" fill="none" stroke={G} strokeWidth="2" />
        <path d="M14 1h10v9H14zM0 3h4v6H0zM34 3h4v6h-4z" />
      </Icon>
    ),
  },
  {
    label: "イーズイン",
    node: (
      <Icon w={36} h={26} color={G}>
        <path d="M8 6h20M0 25c16 0 12-15 22-19" fill="none" stroke={G} strokeWidth="2" />
        <path d="M26 1h9v9h-9zM7 3h4v6H7z" />
      </Icon>
    ),
  },
  {
    label: "イーズアウト",
    node: (
      <Icon w={36} h={26} color={G}>
        <path d="M8 6h20M36 25C20 25 24 10 14 6" fill="none" stroke={G} strokeWidth="2" />
        <path d="M1 1h9v9H1zM26 3h4v6h-4z" />
      </Icon>
    ),
  },
];

const TimelinePanel = () => (
  <TimelineFrame aria-label="タイムライン">
    <TimelineTabs>
      <Tab $left={28} $h={44}>
        <Swatch />
        背景
      </Tab>
      <Tab $left={110} $h={44}>
        <Swatch />
        ループ1
      </Tab>
      <Tab $active $left={78} $h={44} $gap={19}>
        <CloseMark aria-label="閉じる">×</CloseMark>
        <Swatch />
        ループ2
        <MenuIcon />
      </Tab>
    </TimelineTabs>
    <TimelineBody>
      <Layers>
        <TimeBar>
          <Timecode>
            <strong>0:00:00:00</strong>
            <span>00000 (30.00 fps)</span>
          </Timecode>
          <LayerSearch>
            <SearchIcon />
            <input aria-label="レイヤーを検索" />
          </LayerSearch>
          <Cluster>
            <IconButton aria-label="フローチャート">
              <Icon w={34} h={26}>
                <path d="M0 5h22M17 5v12h6" fill="none" stroke="#b8b8b8" strokeWidth="2" />
                <path d="M4 2h8v6H4zM20 2h10v6H20zM20 13h10v7H20zM25 22h9l-4 5z" />
              </Icon>
            </IconButton>
            <IconButton aria-label="シャイレイヤー">
              <Icon w={32} h={26}>
                <path d="M0 15h32v11H0z" fill="#3a3a3a" />
                <path d="M2 10c3 0 4 2 5 2a9 9 0 0 1 18 0c1 0 2-2 5-2v5h-11v7q-3 4-6 0v-7H2z" />
                <circle cx="12.500" cy="9" r="2" fill="#1e1e1e" />
                <circle cx="19.500" cy="9" r="2" fill="#1e1e1e" />
              </Icon>
            </IconButton>
            <IconButton aria-label="フレームブレンド">
              <FrameBlendIcon />
            </IconButton>
            <IconButton aria-label="モーションブラー">
              <MotionBlurIcon />
            </IconButton>
            <IconButton $on aria-label="グラフエディター">
              <Icon w={32} h={30}>
                <path d="M3 5h27v23H3zM8 1v4M14 1v4M20 1v4M26 1v4M0 9h3M0 16h3M0 23h3M6 11c10 0 10 12 20 12" fill="none" stroke="#d8d8d8" strokeWidth="2" />
              </Icon>
            </IconButton>
          </Cluster>
        </TimeBar>
        <Divider />
        <Header>
          <Cell $gap={0} $left={-15}>
            <Slot>
              <EyeIcon />
            </Slot>
            <Slot>
              <Icon w={24} h={22}>
                <path d="M0 7h4l6-7v22l-6-7H0z" />
                <path d="M12 7a5 5 0 0 1 0 8M13 1a10 10 0 0 1 0 20" fill="none" stroke="#b8b8b8" strokeWidth="2.500" />
              </Icon>
            </Slot>
            <Slot>
              <Icon w={14} h={14}>
                <circle cx="7" cy="7" r="7" />
              </Icon>
            </Slot>
            <Slot>
              <LockIcon />
            </Slot>
          </Cell>
          <Cell $gap={24}>
            <ColumnBar />
            <TagIcon />
          </Cell>
          <Cell>
            <ColumnBar />
            <Hash>#</Hash>
          </Cell>
          <Cell $gap={9}>
            <ColumnBar />
            ソース名
          </Cell>
          <Cell $gap={6}>
            <ColumnBar $w={4} />
            <Cell $gap={0}>
              <Slot>
                <ShyIcon />
              </Slot>
              <Slot>
                <SunIcon />
              </Slot>
              <Slot>
                <Icon w={20} h={20}>
                  <path d="M0 0h4v4H0zM4 4h4v4H4zM8 8h4v4H8zM12 12h4v4h-4zM16 16h4v4h-4z" />
                </Icon>
              </Slot>
              <Slot>
                <FxMark>fx</FxMark>
              </Slot>
              <Slot>
                <Icon w={24} h={24}>
                  <path d="M0 4h2v17h19v2H0z" />
                  <path fillRule="evenodd" d="M4 0h20v19H4zM6 2v2h2V2zM6 6v2h2V6zM6 11v2h2v-2zM6 15v2h2v-2zM20 2v2h2V2zM20 6v2h2V6zM20 11v2h2v-2zM20 15v2h2v-2zM10 8v2h8V8z" />
                </Icon>
              </Slot>
              <Slot>
                <Icon w={26} h={26}>
                  <g fill={C.bg} stroke="#b0b0b0" strokeWidth="2">
                    <circle cx="9" cy="17" r="8" />
                    <circle cx="12" cy="14" r="8" />
                    <circle cx="17" cy="9" r="8" fill="#6a6a6a" />
                  </g>
                </Icon>
              </Slot>
              <Slot>
                <Icon w={20} h={20}>
                  <circle cx="10" cy="10" r="9" fill="none" stroke="#b8b8b8" strokeWidth="2" />
                  <path d="M17 3A10 10 0 1 1 3 17z" />
                </Icon>
              </Slot>
              <Slot>
                <Icon w={20} h={20}>
                  <path d="M10 1l8 4v10l-8 4-8-4V5zM2 5l8 4 8-4M10 9v10" fill="none" stroke="#b8b8b8" strokeWidth="2" />
                </Icon>
              </Slot>
            </Cell>
          </Cell>
          <Cell $gap={9}>
            <ColumnBar $w={4} />
            親とリンク
          </Cell>
          <Cell>
            <ColumnBar $w={4} />
          </Cell>
        </Header>
        <Divider />
        <LayerRow n={1} open eye />
        <PropertyGrid>
          <Cell $gap={15} $left={-8}>
            <Icon w={14} h={18} color={C.dim}>
              <path d="M14 0v18L2 9z" />
            </Icon>
            <Icon w={18} h={18}>
              <path d="M9 1l7 8-7 8-7-8z" fill="none" stroke="#b8b8b8" strokeWidth="2" />
            </Icon>
            <Icon w={12} h={16}>
              <path d="M0 0v16l12-8z" />
            </Icon>
          </Cell>
          <Cell $gap={5}>
            <BareButton aria-label="折りたたむ">
              <Chevron w={18} />
            </BareButton>
            <Gap $w={2} />
            <ToggleBox $filled aria-label="ストップウォッチ">
              <StopwatchIcon color={C.blue} hand />
            </ToggleBox>
            <ToggleBox aria-label="グラフ">
              <GraphLineIcon />
            </ToggleBox>
            <PropertyName>回転</PropertyName>
          </Cell>
          <Cell $left={9}>
            <Angle>
              <Red>0</Red>x<Red>+0.0</Red>°
            </Angle>
          </Cell>
          <Cell $left={6}>
            <SpiralIcon />
          </Cell>
        </PropertyGrid>
        <Divider />
        <ExpressionGrid $h={70}>
          <span />
          <ExpressionLabel>エクスプレッション : 回転</ExpressionLabel>
          <Cell $gap={4}>
            <ToggleBox aria-label="エクスプレッションを有効化">
              <Icon w={18} h={12} color={C.blue}>
                <path d="M0 0h18v4H0zM0 8h18v4H0z" />
              </Icon>
            </ToggleBox>
            <ToggleBox aria-label="エクスプレッショングラフ">
              <GraphLineIcon />
            </ToggleBox>
            <Gap $w={0} />
            <SpiralIcon />
            <Gap $w={0} />
            <Icon w={22} h={22}>
              <circle cx="11" cy="11" r="11" />
              <path d="M8 5v12l7-6z" fill="#1e1e1e" />
            </Icon>
          </Cell>
        </ExpressionGrid>
        <Divider />
        <LayerRow n={2} />
      </Layers>

      <GraphSide>
        <GraphRow>
          <PlayheadHost>
            <Navigator>
              <NavCap />
              <NavBar />
              <NavCap $right />
              <NavRest />
            </Navigator>
            <RulerBox>
              <Ruler>
                {hours.map((h) => (
                  <Tick key={h}>{h}</Tick>
                ))}
              </Ruler>
            </RulerBox>
            <WorkArea>
              <WorkCap />
              <WorkBar />
            </WorkArea>
            <Cached />
            <Graph>
              <Curves />
              <AxisLabels>
                <li>0 °</li>
                <li>-100</li>
                <li>-200</li>
                <li>-300</li>
                <li>-400</li>
              </AxisLabels>
            </Graph>
            <Playhead>
              <Icon w={22} h={458}>
                <path d="M10 20h2v438h-2z" fill="#4a90e0" />
                <path d="M0 0h22v14L11 27 0 14z" fill="#4596f0" />
                <path d="M10 14h2v10h-2z" fill="#c8b8a0" />
                <path d="M8 12h6v2H8z" fill="#12304c" />
              </Icon>
            </Playhead>
          </PlayheadHost>
          <Markers>
            <Icon w={22} h={28}>
              <path d="M0 0h22v18L11 28 0 18z" />
            </Icon>
            <MarkerLine />
            <Icon w={28} h={26}>
              <path d="M14 5h14v14H17z" />
              <path d="M15 1v14L2 17z" fill="#1e1e1e" stroke="#b8b8b8" strokeWidth="2" />
              <circle cx="13" cy="18" r="6" fill="#1e1e1e" stroke="#b8b8b8" strokeWidth="2" />
            </Icon>
          </Markers>
        </GraphRow>
        <Editor>
          <LineNo>1</LineNo>
          <Gutter />
          <Code>
            loopOut<em>()</em>
          </Code>
          <EditorHandle />
        </Editor>
        <GraphTools>
          {graphTools.map((t, i) =>
            t.node ? (
              <IconButton key={i} $on={t.on} aria-label={t.label}>
                {t.node}
              </IconButton>
            ) : (
              <Gap key={i} $w={16} />
            ),
          )}
        </GraphTools>
      </GraphSide>
    </TimelineBody>
    <BottomBar>
      <Status>
        <StatusIcons>
          <IconButton $w={30} $on aria-label="レイヤースイッチ">
            <Icon w={24} h={24}>
              <path d="M4 10h20v14H4zM14 2h8v7h-8z" fill="none" stroke="#d8d8d8" strokeWidth="2.500" />
              <path d="M15 13h4v4h-4z" />
            </Icon>
          </IconButton>
          <Icon w={22} h={24}>
            <circle cx="8" cy="9" r="7" fill="none" stroke="#b8b8b8" strokeWidth="2" />
            <path d="M9 9h6v6H9z" />
            <path d="M9 10h12v14H9z" fill="none" stroke="#b8b8b8" strokeWidth="2" />
          </Icon>
          <Icon w={24} h={24}>
            <path d="M9 1H7q-3 0-3 4v3L1 12l3 4v8h5M15 1h2q3 0 3 4v3l3 4-3 4v8h-5" fill="none" stroke="#b8b8b8" strokeWidth="3" />
          </Icon>
          <Icon w={25} h={24}>
            <circle cx="9" cy="10" r="8" />
            <path d="M0 20h22v4H0zM15 6h2l2 12h-4zM22 4h2l-3 12h-2z" />
            <circle cx="23" cy="5" r="2" />
          </Icon>
        </StatusIcons>
        <Gap $w={13} />
        <StatusText $w={470}>
          フレームレンダリング時間 :<b>0ms</b>
        </StatusText>
        <StatusText $w={511}>スイッチ / モード</StatusText>
        <ZoomBar>
          <Icon w={18} h={10}>
            <path d="M0 10l7-7 3 3 2-2 6 6z" />
          </Icon>
          <ZoomRange type="range" min={0} max={100} defaultValue={28} aria-label="時間の拡大率" />
          <Icon w={34} h={14}>
            <path d="M0 14l9-12 4 4-5 8zM10 14L21 0l13 14z" />
          </Icon>
        </ZoomBar>
      </Status>
      <ScrollArea>
        <ScrollThumb $w={820} $h={24} />
      </ScrollArea>
    </BottomBar>
  </TimelineFrame>
);

/* ---------- right column ---------- */

const Side = styled.div`
  display: flex;
  flex-direction: column;
  gap: 8px;
  min-width: 0;
`;
const SidePanel = styled(Panel)<{ $h?: number }>`
  ${(p) => (p.$h ? `flex: none; height: ${p.$h}px;` : "flex: 1;")}
  padding-right: 10px;
`;
const SideBody = styled.div`
  flex: 1;
  overflow: hidden;
`;
const Title = styled.h2<{ $h?: number; $near?: boolean }>`
  display: flex;
  align-items: center;
  justify-content: ${(p) => (p.$near ? "flex-start" : "space-between")};
  flex: none;
  gap: ${(p) => (p.$near ? 20 : 10)}px;
  height: ${(p) => p.$h ?? 52}px;
  margin: 0;
  padding: 0 20px 2px 24px;
  font-size: 24px;
  font-weight: 400;
  color: ${C.bright};
  span { overflow: hidden; }
`;
const Line = styled.div<{ $h: number; $left?: number; $top?: number; $gap?: number }>`
  display: flex;
  align-items: center;
  flex: none;
  gap: ${(p) => p.$gap ?? 8}px;
  height: ${(p) => p.$h}px;
  margin-top: ${(p) => p.$top ?? 0}px;
  padding-left: ${(p) => p.$left ?? 0}px;
`;
const Rule = styled.div`
  height: 2px;
  margin: 1px 0 0 12px;
  background: #131313;
`;
const AlignRow = styled.div`
  display: grid;
  grid-template-columns: repeat(5, 32px);
  column-gap: 36px;
  align-items: center;
  justify-items: center;
  height: 32px;
  padding-left: 20px;
`;
const FieldLabel = styled.label<{ $muted?: boolean; $w?: number }>`
  flex: none;
  width: ${(p) => (p.$w ? `${p.$w}px` : "auto")};
  padding-bottom: 2px;
  color: ${(p) => (p.$muted ? C.dim : C.text)};
`;
const Pill = styled.button<{ $w: number; $muted?: boolean }>`
  width: ${(p) => p.$w}px;
  height: 40px;
  padding-bottom: 2px;
  border-radius: 20px;
  background: ${(p) => (p.$muted ? "#2f2f2f" : "#6a6a6a")};
  color: ${(p) => (p.$muted ? C.dim : "#d0d0d0")};
  font-weight: 700;
`;
const Check = styled.input`
  appearance: none;
  flex: none;
  width: 24px;
  height: 24px;
  border: 4px solid ${C.dim};
  border-radius: 4px;
  background: #121212;
  &:checked { background: ${C.dim}; }
`;
const CheckWrap = styled.label<{ $w: number }>`
  position: relative;
  display: flex;
  align-items: center;
  flex: none;
  gap: 17px;
  width: ${(p) => p.$w}px;
  color: ${C.dim};
  svg { position: absolute; left: 4px; top: 10px; }
`;
const PropTitle = styled.div`
  display: grid;
  grid-template-columns: 158px 1fr;
  height: 38px;
  padding-left: 24px;
  line-height: 34px;
  strong { overflow: visible; }
  a { z-index: 1; padding-left: 1px; color: ${C.blue}; text-decoration: none; }
`;
const PropRow = styled.div`
  display: grid;
  grid-template-columns: 94px 60px 1fr;
  height: 40px;
  padding: 0 0 2px 24px;
  align-items: center;
`;
const PropValues = styled.div`
  display: flex;
  align-self: start;
  gap: 22px;
  z-index: 1;
`;
const Value = styled.span<{ $w?: number }>`
  width: ${(p) => p.$w ?? 38}px;
  height: 38px;
  padding: 4px 0 0 4px;
  border-bottom: 2px solid ${C.dim};
  line-height: 30px;
  font-size: 22px;
  color: ${C.blue};
  b { font-weight: 400; color: ${C.text}; }
`;
const LinkMark = styled.span`
  display: flex;
  align-items: center;
  width: 0;
  margin: 0 -22px 0 -34px;
  padding-right: 34px;
`;

const AlignIcon = ({ d, color = "#b4b4b4" }: { d: string; color?: string }) => (
  <Icon w={32} h={32} color={color}>
    <path d={d} />
  </Icon>
);
const alignPaths = [
  "M1 0h2v32H1zM5 4h15v10H5zM5 18h24v8H5z",
  "M15 0h2v32h-2zM8 4h16v10H8zM4 18h24v8H4z",
  "M29 0h2v32h-2zM13 4h15v10H13zM4 18h24v8H4z",
  "M0 2h32v2H0zM5 5h9v24H5zM18 5h11v15H18z",
  "M0 14h32v2H0zM5 4h9v23H5zM18 7h11v16H18z",
];
const distPaths = [
  "M0 2h32v2H0zM9 5h14v7H9zM0 18h32v2H0zM5 21h22v9H5z",
  "M0 7h32v2H0zM9 4h14v9H9zM0 23h32v2H0zM5 20h22v9H5z",
  "M9 2h14v7H9zM0 10h32v2H0zM5 18h22v9H5zM0 28h32v2H0z",
  "M2 0h2v32H2zM5 5h9v22H5zM20 0h2v32h-2zM23 9h7v14h-7z",
  "M7 0h2v32H7zM3 5h9v22H3zM23 0h2v32h-2zM19 9h9v14h-9z",
];

const properties: { label: string; a: string; b: string; link?: boolean }[] = [
  { label: "アンカ...", a: "160", b: "160" },
  { label: "位置", a: "160", b: "160" },
  { label: "スケール", a: "100", b: "100", link: true },
];

const SideColumn = () => (
  <Side>
    <SidePanel $h={98} aria-label="プレビュー">
      <Title $near $h={38}>
        プレビュー <MenuIcon />
      </Title>
      <Line $h={62} $left={82} $gap={0}>
        {(["first", "prev", "play", "next", "last"] as Transport[]).map((k) => (
          <IconButton key={k} $w={48} aria-label={k}>
            <TransportIcon kind={k} />
          </IconButton>
        ))}
      </Line>
    </SidePanel>
    <SidePanel aria-label="整列">
      <SideBody>
        <Title $h={48}>
          <span>整列</span> <MenuIcon />
        </Title>
        <Line $h={48} $left={14} $top={16} $gap={0}>
          <FieldLabel htmlFor="align-to" $w={184}>
            レイヤーを整列 :
          </FieldLabel>
          <Drop id="align-to" value="コンポジ..." w={200} h={48} />
        </Line>
        <Line $h={80}>
          <AlignRow>
            {alignPaths.map((d) => (
              <AlignIcon key={d} d={d} />
            ))}
          </AlignRow>
        </Line>
        <Rule />
        <Line $h={64} $left={14}>
          <FieldLabel as="span">レイヤーを配置 :</FieldLabel>
        </Line>
        <Line $h={46}>
          <AlignRow>
            {distPaths.map((d) => (
              <AlignIcon key={d} d={d} color={C.dim} />
            ))}
          </AlignRow>
        </Line>
        <Line $h={69} />
        <Divider $color="#000" />
        <Title>
          <span>プロパティ: プリコンポジション 1</span> <MenuIcon />
        </Title>
        <PropTitle>
          <strong>レイヤートラン...</strong>
          <a href="#reset">リセット</a>
        </PropTitle>
        {properties.map((p) => (
          <PropRow key={p.label}>
            <Cell $left={23}>
              <StopwatchIcon />
            </Cell>
            <span>{p.label}</span>
            <PropValues>
              <Value>{p.a}</Value>
              {p.link && (
                <LinkMark>
                  <Icon w={24} h={14}>
                    <g fill="none" stroke={C.blue} strokeWidth="3">
                      <path d="M10 11H7a5 5 0 0 1 0-9h3a5 5 0 0 1 4 5M12 2h6a5 5 0 0 1 0 9h-5" />
                    </g>
                  </Icon>
                </LinkMark>
              )}
              <Value>{p.b}</Value>
            </PropValues>
          </PropRow>
        ))}
        <PropRow>
          <Cell $gap={12} $left={2}>
            <Icon w={12} h={16} color={C.dim}>
              <path d="M12 0v16L0 8z" />
            </Icon>
            <Icon w={18} h={18}>
              <path d="M9 1l8 8-8 8-8-8z" fill={C.dim} stroke="#b0b0b0" strokeWidth="2" />
            </Icon>
            <Icon w={12} h={16}>
              <path d="M0 0v16l12-8z" />
            </Icon>
          </Cell>
          <span>回転</span>
          <PropValues>
            <Value $w={107}>
              <Red>0</Red>
              <b>x</b>
              <Red>+0</Red>
              <b>°</b>
            </Value>
          </PropValues>
        </PropRow>
        <PropRow>
          <Cell $left={23}>
            <StopwatchIcon />
          </Cell>
          <span>不透明度</span>
          <PropValues>
            <Value $w={78}>
              100<b>%</b>
            </Value>
          </PropValues>
        </PropRow>
        <Line $h={30} />
        <Divider $color="#000" />
        <Title>
          <span>トラッカー</span> <MenuIcon />
        </Title>
        <Line $h={40} $top={12} $left={6}>
          <Pill $w={148}>3D カメラ</Pill>
          <Pill $w={244}>ワープスタビライズ</Pill>
        </Line>
        <Line $h={40} $top={10} $left={6}>
          <Pill $w={148}>トラック</Pill>
          <Pill $w={244}>スタビライズ</Pill>
        </Line>
        <Line $h={40} $top={8} $left={8} $gap={0}>
          <FieldLabel htmlFor="source" $w={208}>
            モーションソース :
          </FieldLabel>
          <Drop id="source" value="なし" w={200} />
        </Line>
        <Line $h={40} $top={6} $left={6} $gap={0}>
          <FieldLabel htmlFor="track" $muted $w={186}>
            現在のトラック :
          </FieldLabel>
          <Drop id="track" value="なし" w={220} muted />
        </Line>
        <Line $h={40} $top={6} $left={6} $gap={0}>
          <FieldLabel htmlFor="kind" $muted $w={186}>
            トラックの種類 :
          </FieldLabel>
          <Drop id="kind" value="スタビライズ" w={220} muted />
        </Line>
        <Line $h={46} $left={16} $gap={0}>
          <CheckWrap $w={116}>
            <Check type="checkbox" defaultChecked />
            位置
            <Icon w={16} h={13}>
              <path d="M1 7l5 5 9-11" fill="none" stroke="#121212" strokeWidth="3" />
            </Icon>
          </CheckWrap>
          <CheckWrap $w={110}>
            <Check type="checkbox" />
            回転
          </CheckWrap>
          <CheckWrap $w={160}>
            <Check type="checkbox" />
            スケール
          </CheckWrap>
        </Line>
        <Line $h={44} $left={40}>
          <FieldLabel as="span" $muted>
            ターゲット :
          </FieldLabel>
        </Line>
        <Line $h={40} $left={6} $gap={6}>
          <Pill $muted $w={236}>
            ターゲットを設定...
          </Pill>
          <Pill $muted $w={160}>
            オプション...
          </Pill>
        </Line>
        <Line $h={60} $left={92} $gap={32}>
          <FieldLabel as="span" $muted $w={53}>
            分析 :
          </FieldLabel>
          {(["prev", "back", "play", "next"] as Transport[]).map((k) => (
            <BareButton key={k} aria-label={k}>
              <TransportIcon kind={k} color={C.dim} />
            </BareButton>
          ))}
        </Line>
        <Line $h={40} $left={22} $gap={22}>
          <Pill $muted $w={176}>
            リセット
          </Pill>
          <Pill $muted $w={174}>
            適用
          </Pill>
        </Line>
      </SideBody>
    </SidePanel>
  </Side>
);

export default function App() {
  return (
    <>
      <Global />
      <Frame>
        <Workspace>
          <TopRow>
            <ProjectPanel />
            <CompositionPanel />
          </TopRow>
          <TimelinePanel />
        </Workspace>
        <SideColumn />
      </Frame>
    </>
  );
}
